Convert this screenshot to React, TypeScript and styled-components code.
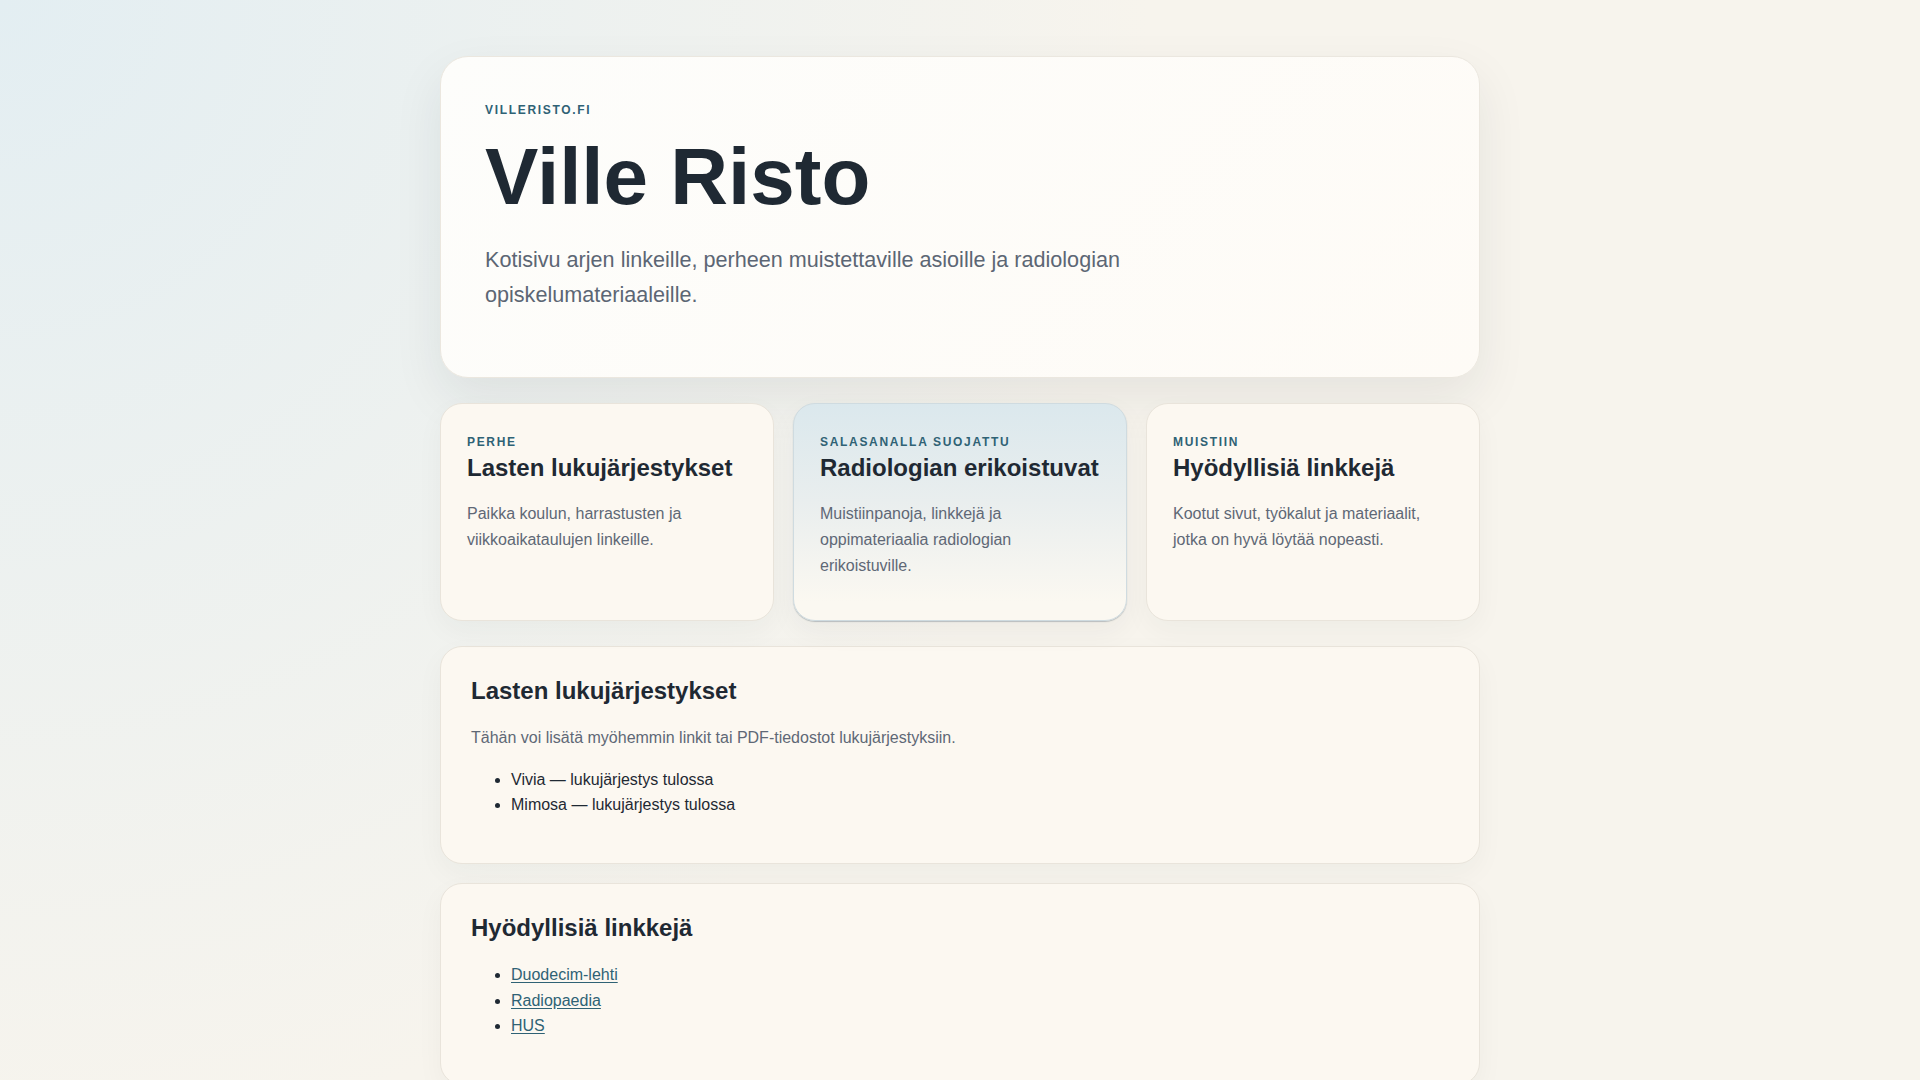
import React from "react";
import styled, { createGlobalStyle } from "styled-components";

const GlobalStyle = createGlobalStyle`
  *, *::before, *::after { box-sizing: border-box; }
  html, body { margin: 0; padding: 0; }
  body {
    min-height: 100vh;
    font-family: "Liberation Sans", Arial, sans-serif;
    color: #1f2933;
    background:
      radial-gradient(circle 1150px at 0 0, #e3eef2 0%, rgba(247, 244, 237, 0) 100%),
      #f7f4ed;
    background-attachment: fixed;
  }
`;

const Page = styled.main`
  width: 1040px;
  margin: 0 auto;
  padding: 56px 0 48px;
`;

const Hero = styled.header`
  background: linear-gradient(135deg, #fdfdfb 0%, #fefbf6 100%);
  border: 1px solid #ebe7df;
  border-radius: 28px;
  padding: 44px 44px 43px;
  box-shadow: 0 20px 50px rgba(31, 41, 51, 0.08);
  margin-bottom: 25px;
`;

const Eyebrow = styled.div<{ $gap?: number }>`
  font-size: 12px;
  line-height: 1.5;
  font-weight: 700;
  letter-spacing: 0.14em;
  text-transform: uppercase;
  color: #2f6275;
  margin-bottom: ${(p) => p.$gap ?? 3}px;
`;

const Title = styled.h1`
  margin: 0 0 24px;
  font-size: 80px;
  line-height: 1.05;
  font-weight: 700;
  color: #1f2933;
`;

const Lead = styled.p`
  margin: 0 0 1em;
  max-width: 720px;
  font-size: 21.6px;
  line-height: 1.6;
  color: #5c6674;
`;

const CardGrid = styled.section`
  display: grid;
  grid-template-columns: repeat(3, 1fr);
  gap: 19px;
  margin-bottom: 25px;
`;

const Card = styled.article<{ $featured?: boolean }>`
  border-radius: 22px;
  padding: 29px 26px 26px;
  border: 1px solid ${(p) => (p.$featured ? "#cfdbe0" : "#e9e4db")};
  background: ${(p) =>
    p.$featured
      ? "linear-gradient(180deg, #dbe8ed 0%, #e9eeee 45%, #fbf8f1 92%)"
      : "#fcf8f1"};
  box-shadow: ${(p) =>
    p.$featured
      ? "0 1px 1px rgba(60, 80, 95, 0.3), 0 10px 28px rgba(31, 41, 51, 0.05)"
      : "0 10px 28px rgba(31, 41, 51, 0.04)"};
`;

const CardTitle = styled.h2`
  margin: 0 0 19px;
  font-size: 24px;
  line-height: 1.2;
  font-weight: 700;
  color: #1f2933;
`;

const CardText = styled.p`
  margin: 0 0 16px;
  font-size: 16px;
  line-height: 1.6;
  color: #5f6876;
`;

const Section = styled.section`
  background: #fcf8f1;
  border: 1px solid #e9e4db;
  border-radius: 22px;
  padding: 29px 30px 29px;
  margin-bottom: 19px;
  box-shadow: 0 10px 28px rgba(31, 41, 51, 0.04);
`;

const SectionTitle = styled.h2`
  margin: 0 0 19px;
  font-size: 24px;
  line-height: 1.25;
  font-weight: 700;
  color: #1f2933;
`;

const SectionText = styled.p`
  margin: 0 0 16px;
  font-size: 16px;
  line-height: 1.6;
  color: #5f6876;
`;

const List = styled.ul`
  margin: 0 0 16px;
  padding-left: 40px;
  font-size: 16px;
  line-height: 1.6;
  color: #1f2933;
`;

const Link = styled.a`
  color: #2f6275;
  text-decoration: underline;
  text-underline-offset: 2px;
`;

const cards = [
  {
    eyebrow: "Perhe",
    title: "Lasten lukujärjestykset",
    text: "Paikka koulun, harrastusten ja viikkoaikataulujen linkeille.",
  },
  {
    eyebrow: "Salasanalla suojattu",
    title: "Radiologian erikoistuvat",
    text: "Muistiinpanoja, linkkejä ja oppimateriaalia radiologian erikoistuville.",
    featured: true,
  },
  {
    eyebrow: "Muistiin",
    title: "Hyödyllisiä linkkejä",
    text: "Kootut sivut, työkalut ja materiaalit, jotka on hyvä löytää nopeasti.",
  },
];

export default function App() {
  return (
    <>
      <GlobalStyle />
      <Page>
        <Hero>
          <Eyebrow $gap={16}>villeristo.fi</Eyebrow>
          <Title>Ville Risto</Title>
          <Lead>
            Kotisivu arjen linkeille, perheen muistettaville asioille ja
            radiologian opiskelumateriaaleille.
          </Lead>
        </Hero>

        <CardGrid>
          {cards.map((c) => (
            <Card key={c.title} $featured={c.featured}>
              <Eyebrow>{c.eyebrow}</Eyebrow>
              <CardTitle>{c.title}</CardTitle>
              <CardText>{c.text}</CardText>
            </Card>
          ))}
        </CardGrid>

        <Section>
          <SectionTitle>Lasten lukujärjestykset</SectionTitle>
          <SectionText>
            Tähän voi lisätä myöhemmin linkit tai PDF-tiedostot
            lukujärjestyksiin.
          </SectionText>
          <List>
            <li>Vivia — lukujärjestys tulossa</li>
            <li>Mimosa — lukujärjestys tulossa</li>
          </List>
        </Section>

        <Section>
          <SectionTitle>Hyödyllisiä linkkejä</SectionTitle>
          <List>
            <li>
              <Link href="#">Duodecim-lehti</Link>
            </li>
            <li>
              <Link href="#">Radiopaedia</Link>
            </li>
            <li>
              <Link href="#">HUS</Link>
            </li>
          </List>
        </Section>
      </Page>
    </>
  );
}
